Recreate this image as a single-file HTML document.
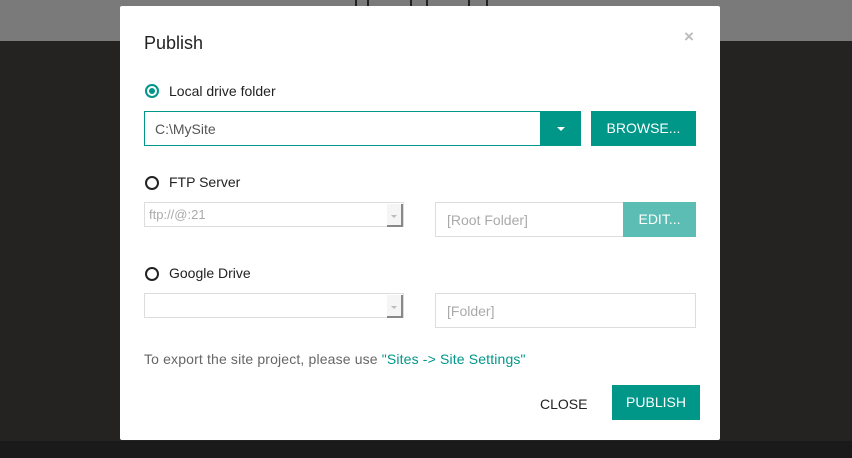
<!DOCTYPE html>
<html><head><style>
body{margin:0;width:852px;height:458px;background:#242322;position:relative;overflow:hidden;font-family:"Liberation Sans",sans-serif}
.top{position:absolute;left:0;top:0;width:852px;height:41px;background:#7a7a7a}
.bot{position:absolute;left:0;top:441px;width:852px;height:17px;background:#1a1a1a}
.sq{position:absolute;top:-2px;height:8px;border:2px solid #222;}
.dlg{position:absolute;left:120px;top:6px;width:600px;height:434px;background:#fff;border-radius:2px}
.a{position:absolute}
.radio{position:absolute;width:10px;height:10px;border:2px solid #222;border-radius:50%}
.lbl{position:absolute;font-size:14px;color:#222}
.teal{background:#009688;color:#fff}
</style></head><body>
<div class="top"></div>
<div class="bot"></div>
<div class="sq" style="left:355px;width:10px"></div>
<div class="sq" style="left:410px;width:14px;border-top:none"></div>
<div class="sq" style="left:468px;width:16px"></div>
<div class="dlg">
<div class="a" style="left:24px;top:27px;font-size:18px;color:#222">Publish</div>
<div class="a" style="left:564px;top:21px;font-size:17px;color:#bbb;font-weight:bold">×</div>

<div class="radio" style="left:25px;top:78px;border-color:#009688"></div>
<div class="a" style="left:29px;top:82px;width:6px;height:6px;border-radius:50%;background:#009688"></div>
<div class="lbl" style="left:49px;top:77px">Local drive folder</div>
<div class="a" style="left:24px;top:105px;width:395px;height:33px;border:1px solid #009688"></div>
<div class="a" style="left:35px;top:115px;font-size:14px;color:#555">C:\MySite</div>
<div class="a teal" style="left:421px;top:105px;width:40px;height:35px"></div>
<div class="a" style="left:437px;top:121px;width:0;height:0;border-left:4px solid transparent;border-right:4px solid transparent;border-top:4px solid #fff"></div>
<div class="a teal" style="left:471px;top:105px;width:105px;height:35px;line-height:35px;text-align:center;font-size:14px">BROWSE...</div>

<div class="radio" style="left:25px;top:170px"></div>
<div class="lbl" style="left:49px;top:168px">FTP Server</div>
<div class="a" style="left:24px;top:196px;width:258px;height:23px;border:1px solid #ddd"></div>
<div class="a" style="left:29px;top:201px;font-size:13px;color:#aaa">ftp://@:21</div>
<div class="a" style="left:267px;top:198px;width:14px;height:21px;border-right:2px solid #888;border-bottom:2px solid #888;background:#f5f5f5"></div>
<div class="a" style="left:271px;top:209px;border-left:3px solid transparent;border-right:3px solid transparent;border-top:3px solid #bbb"></div>
<div class="a" style="left:315px;top:196px;width:187px;height:33px;border:1px solid #ddd"></div>
<div class="a" style="left:327px;top:206px;font-size:14px;color:#aaa">[Root Folder]</div>
<div class="a" style="left:503px;top:196px;width:73px;height:35px;background:#5bbdb3;color:#fff;line-height:35px;text-align:center;font-size:14px">EDIT...</div>

<div class="radio" style="left:25px;top:261px"></div>
<div class="lbl" style="left:49px;top:259px">Google Drive</div>
<div class="a" style="left:24px;top:287px;width:258px;height:23px;border:1px solid #ddd"></div>
<div class="a" style="left:267px;top:289px;width:14px;height:21px;border-right:2px solid #888;border-bottom:2px solid #888;background:#f5f5f5"></div>
<div class="a" style="left:271px;top:300px;border-left:3px solid transparent;border-right:3px solid transparent;border-top:3px solid #bbb"></div>
<div class="a" style="left:315px;top:287px;width:259px;height:33px;border:1px solid #ddd"></div>
<div class="a" style="left:327px;top:297px;font-size:14px;color:#aaa">[Folder]</div>

<div class="a" style="left:24px;top:345px;font-size:14px;color:#666;letter-spacing:0.15px">To export the site project, please use <span style="color:#00968a">"Sites -&gt; Site Settings"</span></div>
<div class="a" style="left:420px;top:390px;font-size:14px;color:#222">CLOSE</div>
<div class="a teal" style="left:492px;top:379px;width:88px;height:35px;line-height:35px;text-align:center;font-size:14px">PUBLISH</div>
</div>
</body></html>
